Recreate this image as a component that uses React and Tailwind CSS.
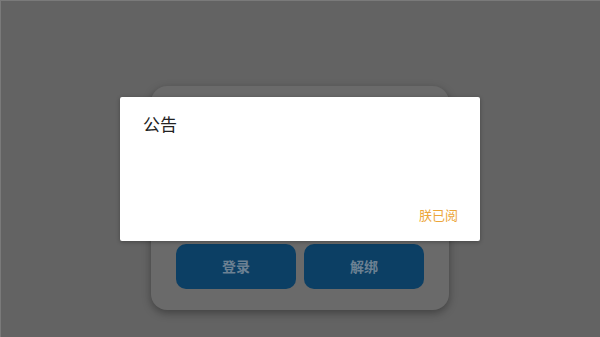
export default function App() {
  const font = { fontFamily: '"Noto Sans CJK SC", "Noto Sans", sans-serif' };
  return (
    <div
      className="relative w-[600px] h-[337px] overflow-hidden bg-[#636363] shadow-[inset_1px_1px_0_#7a7a7a]"
      style={font}
    >
      <div className="flex justify-center pt-[86px]">
        <div className="w-[298px] h-[224px] rounded-[16px] bg-[#6a6a6a] shadow-[0_3px_8px_rgba(0,0,0,0.35)] flex flex-col justify-end pb-[21px] px-[25px]">
          <div className="flex gap-[8px]">
            <div className="w-[120px] h-[45px] rounded-[10px] bg-[#0c3f64] flex items-center justify-center text-[14px] font-bold text-[#6c8193]">
              登录
            </div>
            <div className="w-[120px] h-[45px] rounded-[10px] bg-[#0c3f64] flex items-center justify-center text-[14px] font-bold text-[#6c8193]">
              解绑
            </div>
          </div>
        </div>
      </div>
      <div className="absolute inset-0 flex items-center justify-center">
        <div className="w-[360px] h-[144px] bg-white rounded-[2px] shadow-[0_1px_4px_rgba(0,0,0,0.3)] flex flex-col justify-between pt-[14px] pl-[23px] pr-[22px] pb-[16px]">
          <div className="text-[17px] leading-[26px] text-[#222222]">公告</div>
          <div className="flex justify-end">
            <span className="text-[13px] leading-[20px] text-[#eca63a]">朕已阅</span>
          </div>
        </div>
      </div>
    </div>
  );
}
